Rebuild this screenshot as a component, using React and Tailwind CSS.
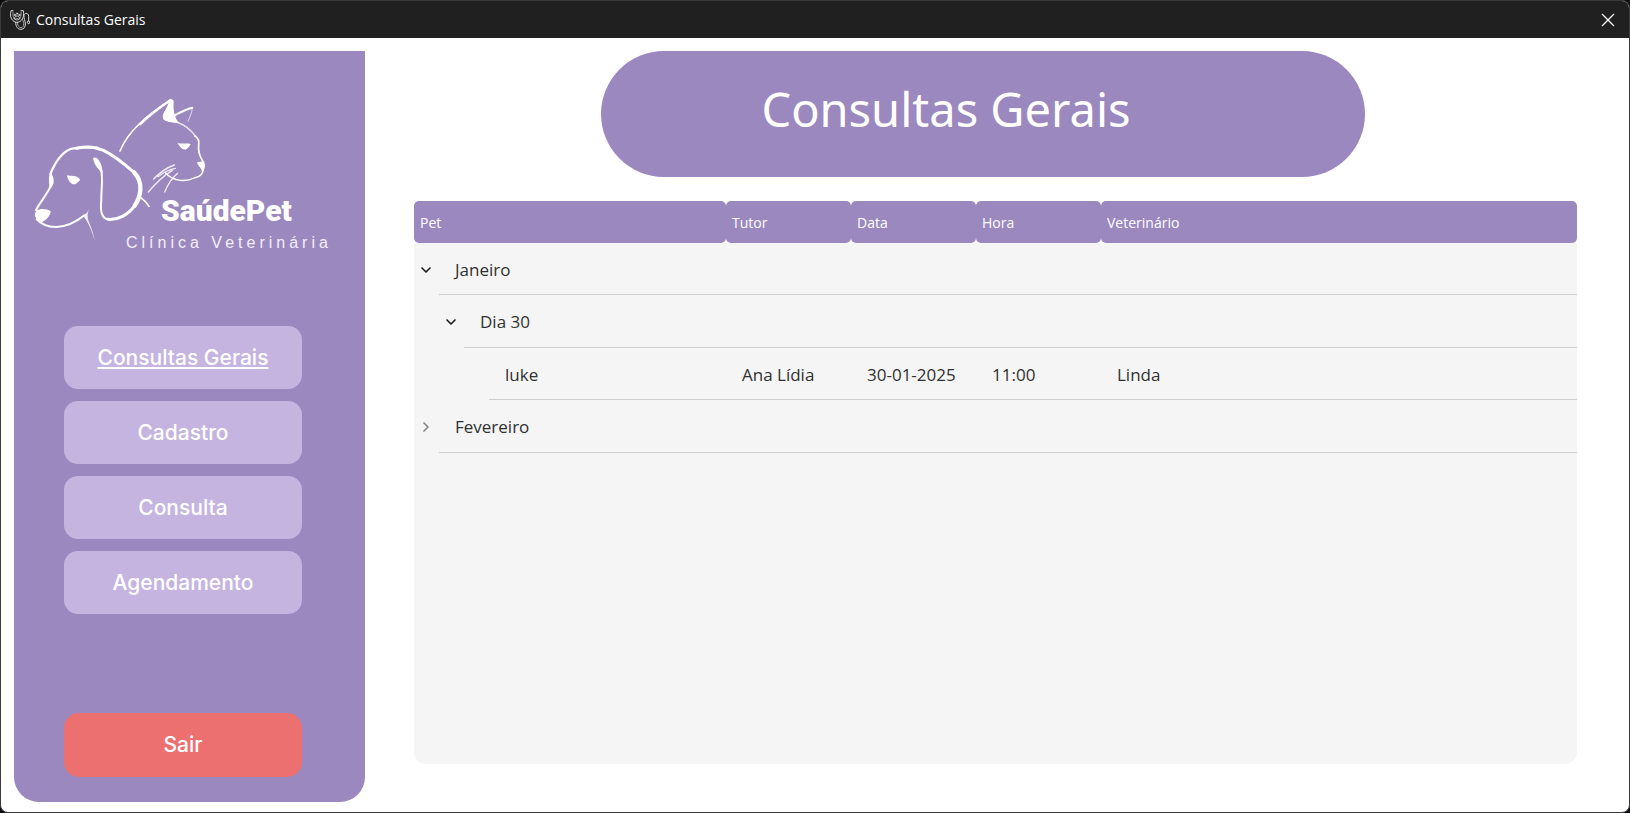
import { useState } from "react";
import { ChevronDown, ChevronRight } from "lucide-react";

const NAV = ["Consultas Gerais", "Cadastro", "Consulta", "Agendamento"];

const MONTHS = [
  {
    name: "Janeiro",
    days: [
      {
        name: "Dia 30",
        items: [{ pet: "luke", tutor: "Ana Lídia", date: "30-01-2025", time: "11:00", vet: "Linda" }],
      },
    ],
  },
  { name: "Fevereiro", days: [] },
];

function AppIcon() {
  return (
    <svg viewBox="0 0 60 60" className="h-5 w-5" fill="none" stroke="#d6d6d6" strokeWidth="3" strokeLinecap="round" strokeLinejoin="round">
      <path d="M9 2H3C0 14 1 24 8 31C13 36 17 37 21 37C25 37 30 35 34 31C41 24 42 14 40 2H33" />
      <path d="M9 6C8 18 10 30 21 30S34 18 33 6" strokeWidth="2" />
      <path d="M17 37C17 50 23 58 33 58C42 58 46 51 46 42C46 32 41 26 42 17C43 7 56 8 56 19V33" />
      <path d="M22 38C23 48 27 53 33 53C39 53 41 48 41 41C41 34 37 30 37 27" strokeWidth="2" />
      <circle cx="56" cy="37" r="4" />
      <path d="M13 26C14 20 18 18 21 18S28 20 29 26C26 30 23 26 21 26S16 30 13 26Z" />
      <circle cx="14" cy="15" r="2" />
      <circle cx="21" cy="11" r="2" />
      <circle cx="28" cy="15" r="2" />
    </svg>
  );
}

function Logo() {
  return (
    <svg viewBox="0 0 330 175" className="w-[330px]" role="img" aria-label="SaúdePet Clínica Veterinária">
      <g transform="scale(.33333)" fill="none" stroke="#fff" strokeLinecap="round" strokeLinejoin="round">
        <path d="M300 198C325 137 380 92 452 45" strokeWidth="5" />
        <path d="M360 118C388 91 418 68 452 45" strokeWidth="7" />
        <path d="M447 48C455 40 462 42 461 54C459 75 464 97 476 114C456 113 435 110 429 101C424 84 443 72 447 48Z" fill="#fff" stroke="none" />
        <path d="M464 91C482 81 500 72 517 68" strokeWidth="6" />
        <path d="M517 68C516 84 509 97 504 109" strokeWidth="3" opacity=".7" />
        <path d="M470 111C495 120 514 136 527 154" strokeWidth="4" opacity=".75" />
        <path d="M525 153C537 161 538 170 536 181C533 204 542 218 549 230" strokeWidth="5" />
        <path d="M531 232L552 229C558 241 554 252 545 264C548 249 535 247 531 232Z" fill="#fff" stroke="none" />
        <path d="M552 240C551 268 541 275 522 279C502 290 462 292 437 264" strokeWidth="4" />
        <path d="M472 174C485 178 500 173 512 177C508 186 502 193 495 194C482 192 478 182 472 174Z" fill="#fff" stroke="none" />
        <path d="M401 282C420 262 440 248 463 240M414 275C430 262 447 254 466 250M385 321C408 294 430 272 457 256M434 321C443 300 455 280 473 265" strokeWidth="4" opacity=".85" />

        <path d="M48 375C62 349 86 322 93 300" strokeWidth="6" />
        <path d="M92 262C105 282 105 299 88 314C90 295 82 280 92 262Z" fill="#fff" stroke="none" />
        <path d="M91 267C105 233 123 203 152 192C180 184 210 188 232 188" strokeWidth="7" />
        <path d="M170 190C210 182 225 187 250 196C286 213 318 241 343 263" strokeWidth="9" />
        <path d="M343 263C371 291 363 335 344 362" strokeWidth="13" />
        <path d="M344 362C325 390 292 406 264 403" strokeWidth="9" />
        <path d="M264 403C241 400 241 370 244 344C243 311 251 280 242 250" strokeWidth="6" />
        <path d="M219 219C231 210 249 236 248 268C241 256 222 243 219 219Z" fill="#fff" stroke="none" />
        <path d="M50 402C78 434 137 437 193 391" strokeWidth="6" />
        <path d="M188 391C199 387 204 380 207 372C200 390 203 402 209 416C215 432 222 450 224 467C215 436 205 412 188 391Z" fill="#fff" stroke="none" opacity=".85" />
        <path d="M45 385C50 368 80 370 92 379C91 395 75 408 64 413C52 406 42 395 45 385Z" fill="#fff" stroke="none" />
        <path d="M141 271C153 275 168 268 181 284C172 294 166 299 158 298C148 293 142 280 141 271Z" fill="#fff" stroke="none" />
        <path d="M359 335C370 343 380 353 387 364" strokeWidth="5" />
      </g>
      <text x="141" y="136" fill="#fff" className="font-['Roboto'] text-[30px] font-black">SaúdePet</text>
      <text x="106" y="163" fill="#f3effa" className="font-['Liberation_Sans'] text-base tracking-[4px]">Clínica Veterinária</text>
    </svg>
  );
}

const INDENT = ["pl-0", "pl-[25px]", "pl-[50px]"];

function TreeRow({ depth, label, open, onToggle, cells = ["", "", "", ""] }) {
  const Icon = open ? ChevronDown : ChevronRight;
  return (
    <tr className="h-[52px] even:h-[53px]">
      <td className="h-[inherit] p-0">
        <div className={`flex h-full ${INDENT[depth]}`}>
          <div className="flex w-[25px] shrink-0 items-center pt-px pl-1">
            {onToggle && (
              <button type="button" onClick={onToggle} aria-expanded={open} aria-label={label}>
                <Icon size={16} strokeWidth={2.500} className={open ? "text-[#1c1c1c]" : "text-[#858585]"} />
              </button>
            )}
          </div>
          <div className="flex flex-1 items-center border-b border-[#cecece] pt-0.5 pl-4">{label}</div>
        </div>
      </td>
      {cells.map((c, i) => (
        <td key={i} className="border-b border-[#cecece] pt-0.5 pb-0 pl-4">{c}</td>
      ))}
    </tr>
  );
}

export default function App() {
  const [active, setActive] = useState("Consultas Gerais");
  const [open, setOpen] = useState({ Janeiro: true, "Dia 30": true });
  const toggle = (k) => setOpen((o) => ({ ...o, [k]: !o[k] }));

  const rows = [];
  MONTHS.forEach((m) => {
    rows.push(<TreeRow key={m.name} depth={0} label={m.name} open={!!open[m.name]} onToggle={() => toggle(m.name)} />);
    if (!open[m.name]) return;
    m.days.forEach((d) => {
      rows.push(<TreeRow key={d.name} depth={1} label={d.name} open={!!open[d.name]} onToggle={() => toggle(d.name)} />);
      if (!open[d.name]) return;
      d.items.forEach((a) =>
        rows.push(<TreeRow key={a.pet} depth={2} label={a.pet} cells={[a.tutor, a.date, a.time, a.vet]} />)
      );
    });
  });

  return (
    <div className="flex min-h-screen bg-[#0c0c10] font-['Open_Sans',sans-serif]">
      <div className="flex flex-1 flex-col overflow-hidden rounded-lg border border-[#3a3a3a] bg-white">
        <header className="flex h-[37px] shrink-0 items-center justify-between bg-[#212020] pr-3 pl-[9px] text-white">
          <div className="flex items-center gap-1.5">
            <AppIcon />
            <span className="text-sm">Consultas Gerais</span>
          </div>
          <button type="button" aria-label="Fechar">
            <svg viewBox="0 0 18 18" className="h-[18px] w-[18px]" stroke="#fff" strokeWidth="1.300">
              <path d="M3 3l12 12M15 3L3 15" />
            </svg>
          </button>
        </header>

        <div className="flex flex-1 pt-[13px] pb-2.5 pl-[13px]">
          <aside className="flex w-[351px] shrink-0 flex-col rounded-b-[25px] bg-[#9b88bf] pb-[25px]">
            <div className="pt-[34px] pl-[6px]">
              <Logo />
            </div>
            <nav className="mt-[66px] flex flex-col gap-3 pr-[63px] pl-[50px]">
              {NAV.map((n) => (
                <button
                  key={n}
                  type="button"
                  onClick={() => setActive(n)}
                  className={`h-[63px] rounded-[14px] bg-[#c5b4e0] font-['Inter'] text-[21px] font-medium text-white ${n === active ? "underline decoration-2 underline-offset-2" : ""}`}
                >
                  {n}
                </button>
              ))}
            </nav>
            <div className="mt-auto flex flex-col pr-[63px] pl-[50px]">
              <button type="button" className="h-16 rounded-[15px] bg-[#ed7071] font-['Inter'] text-[21px] font-medium text-white">
                Sair
              </button>
            </div>
          </aside>

          <main className="flex min-w-0 flex-1 flex-col pr-[52px] pb-[38px] pl-[49px]">
            <div className="flex justify-center pr-[25px]">
              <h1 className="flex h-[126px] w-full max-w-[764px] items-center justify-center rounded-full bg-[#9b88bf] pr-[74px] pb-2.5 font-['Noto_Sans'] text-[47px] text-white">
                Consultas Gerais
              </h1>
            </div>

            <div className="mt-6 flex-1 overflow-hidden rounded-b-xl bg-[#f5f5f5]">
              <table className="w-full table-fixed border-separate border-spacing-0 text-left text-[17px] text-[#303030]">
                <colgroup>
                  <col className="w-[312px]" />
                  <col className="w-[125px]" />
                  <col className="w-[125px]" />
                  <col className="w-[125px]" />
                  <col />
                </colgroup>
                <thead>
                  <tr>
                    {["Pet", "Tutor", "Data", "Hora", "Veterinário"].map((h) => (
                      <th key={h} className="bg-white p-0 text-sm font-normal text-white">
                        <div className="flex h-[42px] items-center rounded-[5px] bg-[#9b88bf] px-1.5 pt-0.5">{h}</div>
                      </th>
                    ))}
                  </tr>
                </thead>
                <tbody>{rows}</tbody>
              </table>
            </div>
          </main>
        </div>
      </div>
    </div>
  );
}
